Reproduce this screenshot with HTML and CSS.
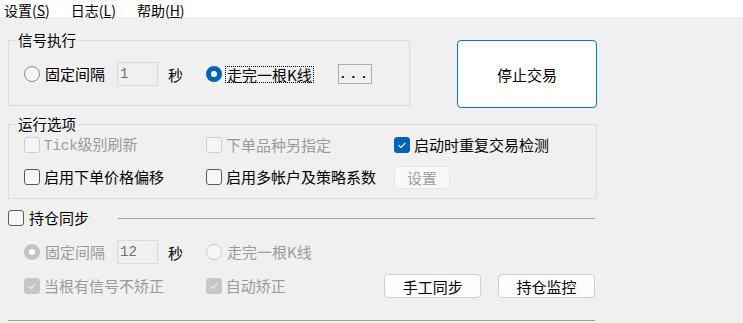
FILE: index.html
```html
<!DOCTYPE html>
<html lang="zh-CN">
<head>
<meta charset="utf-8">
<title>交易设置</title>
<link rel="stylesheet" href="styles.css">
</head>
<body>
<div class="menubar">
  <span class="menu">设置(<u>S</u>)</span>
  <span class="menu">日志(<u>L</u>)</span>
  <span class="menu">帮助(<u>H</u>)</span>
</div>
<div class="main">
  <div class="top">
    <fieldset class="group g1">
      <legend>信号执行</legend>
      <div class="row r1">
        <label class="opt w-first"><span class="radio"></span><span>固定间隔</span></label>
        <span class="num">1</span>
        <span class="unit">秒</span>
        <label class="opt w-second"><span class="radio on"></span><span class="focus">走完一根K线</span></label>
        <button class="dots">...</button>
      </div>
    </fieldset>
    <button class="stop">停止交易</button>
  </div>

  <fieldset class="group g2">
    <legend>运行选项</legend>
    <div class="grid">
      <label class="opt dis"><span class="check"></span><span><span class="mono">Tick</span>级别刷新</span></label>
      <label class="opt dis"><span class="check"></span><span>下单品种另指定</span></label>
      <label class="opt"><span class="check on"><svg viewBox="0 0 16 16"><path d="M4.2 8.3 L6.8 10.8 L11.8 5.6"/></svg></span><span>启动时重复交易检测</span></label>
      <label class="opt"><span class="check"></span><span>启用下单价格偏移</span></label>
      <label class="opt"><span class="check"></span><span>启用多帐户及策略系数</span></label>
      <button class="btn-dis">设置</button>
    </div>
  </fieldset>

  <div class="sync">
    <div class="sync-head">
      <label class="opt head"><span class="check"></span><span>持仓同步</span></label>
      <span class="rule"></span>
    </div>
    <div class="row r2">
      <label class="opt dis w-first"><span class="radio don"></span><span>固定间隔</span></label>
      <span class="num">12</span>
      <span class="unit">秒</span>
      <label class="opt dis"><span class="radio doff"></span><span>走完一根K线</span></label>
    </div>
    <div class="row r3">
      <label class="opt dis w-col1"><span class="check don"><svg viewBox="0 0 16 16"><path d="M4.2 8.3 L6.8 10.8 L11.8 5.6"/></svg></span><span>当根有信号不矫正</span></label>
      <label class="opt dis w-col2"><span class="check don"><svg viewBox="0 0 16 16"><path d="M4.2 8.3 L6.8 10.8 L11.8 5.6"/></svg></span><span>自动矫正</span></label>
      <button class="btn">手工同步</button>
      <button class="btn btn2">持仓监控</button>
    </div>
    <div class="bottom-rule"></div>
  </div>
</div>
</body>
</html>
```

FILE: styles.css
```css
* { box-sizing: border-box; }

body {
  margin: 0;
  width: 743px;
  height: 323px;
  overflow: hidden;
  background: #f0f0f0;
  font-family: "Noto Sans CJK SC", "Microsoft YaHei", sans-serif;
  font-size: 15px;
  color: #000;
}

.menubar {
  height: 17px;
  background: #fff;
  display: flex;
  align-items: flex-start;
  gap: 21px;
  padding-left: 4px;
  font-size: 14px;
}
.menu {
  display: block;
  padding-top: 2px;
  line-height: 16px;
}
.menu u { text-underline-offset: 1px; }

.main { padding: 15px 0 0 8px; }

.top { display: flex; align-items: flex-start; }

.group {
  margin: 0;
  padding: 0;
  min-width: 0;
  border: 1px solid #dcdcdc;
}
.group legend {
  margin-left: 7px;
  padding: 0 2px;
  font-size: 14.5px;
  line-height: 16px;
}

.g1 { width: 402px; height: 74px; }
.g2 { width: 589px; height: 83px; margin-top: 8px; }

.row { display: flex; align-items: center; height: 24px; padding-left: 15px; }
.r1 { margin-top: 14px; }

.opt {
  display: flex;
  align-items: center;
  gap: 4px;
  line-height: 20px;
  white-space: nowrap;
}
.opt .radio + * { margin-left: 1px; }
.dis { color: #9a9a9a; }
.mono { font-family: "Liberation Mono", monospace; font-size: 14px; }

.w-first { width: 93px; }
.w-second { width: 132px; gap: 3px; }

.radio {
  width: 16px;
  height: 16px;
  border-radius: 50%;
  border: 1px solid #8a8a8a;
  background: #f7f7f7;
  flex: none;
}
.radio.on { border: 5px solid #0063b8; background: #fff; }
.radio.don { border: 5px solid #c4c4c4; background: #fff; }
.radio.doff { border-color: #cfcfcf; background: #f6f6f6; }

.check {
  width: 16px;
  height: 16px;
  border-radius: 3px;
  border: 1px solid #5a5a5a;
  background: #f7f7f7;
  flex: none;
  display: flex;
}
.dis .check { border-color: #cdcdcd; background: #f6f6f6; }
.check svg { width: 14px; height: 14px; }
.check path { fill: none; stroke: #fff; stroke-width: 1.3; }
.check.on { background: #0063b8; border-color: #0063b8; }
.dis .check.don { background: #c6c6c6; border-color: #c6c6c6; }
.check.don path { stroke: #ececec; }

.num {
  width: 41px;
  height: 24px;
  border: 1px solid #dadada;
  padding-left: 2px;
  font-family: "Liberation Mono", monospace;
  font-size: 14px;
  line-height: 22px;
  color: #6d6d6d;
  flex: none;
}
.unit { width: 38px; margin-left: 10px; }

.focus {
  outline: 1px dotted #000;
  line-height: 15px;
  padding: 0 1px;
}

.dots {
  width: 34px;
  height: 20px;
  border: 1px solid #adadad;
  background: #f0f0f0;
  padding: 0 0 0 2px;
  font-family: "Liberation Sans", sans-serif;
  font-size: 13px;
  font-weight: bold;
  letter-spacing: 7px;
  line-height: 16px;
  color: #000;
}

.stop {
  margin: 8px 0 0 47px;
  width: 140px;
  height: 68px;
  background: #fff;
  border: 1px solid #0078d4;
  border-radius: 4px;
  font-family: inherit;
  font-size: 15px;
  color: #000;
}

.grid {
  display: grid;
  grid-template-columns: 182px 188px auto;
  grid-auto-rows: 24px;
  row-gap: 8px;
  align-items: center;
  padding-left: 15px;
  margin-top: 1px;
}

.btn-dis {
  width: 56px;
  height: 23px;
  border: 1px solid #e6e6e6;
  border-radius: 4px;
  background: #f9f9f9;
  font-family: inherit;
  font-size: 15px;
  color: #a0a0a0;
  padding: 0;
}

.sync { width: 587px; }
.sync-head { display: flex; align-items: center; height: 20px; margin-top: 9px; }
.head { gap: 5px; }
.rule { flex: 1; height: 1px; background: #a0a0a0; margin-left: 29px; }

.r2 { margin-top: 12px; padding-left: 16px; }
.r3 { margin-top: 10px; padding-left: 16px; }
.w-col1 { width: 182px; }
.w-col2 { width: 179px; }

.btn {
  width: 97px;
  height: 24px;
  border: 1px solid #cfcfcf;
  border-radius: 4px;
  background: #fdfdfd;
  font-family: inherit;
  font-size: 15px;
  color: #000;
  padding: 0;
}
.btn2 { margin-left: 17px; }

.bottom-rule { height: 1px; background: #a0a0a0; margin-top: 22px; }
```
